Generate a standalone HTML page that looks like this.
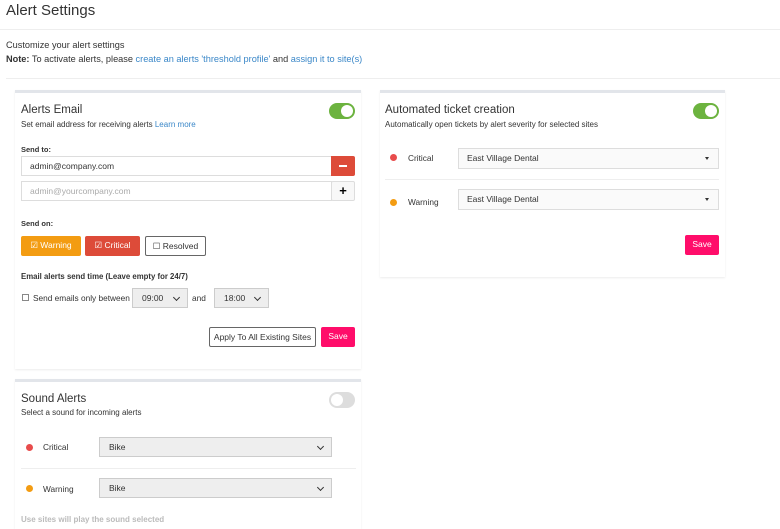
<!DOCTYPE html>
<html><head><style>
*{box-sizing:border-box;margin:0;padding:0}
body{width:780px;height:519px;overflow:hidden;background:#fff;font-family:"Liberation Sans",sans-serif;color:#333;position:relative;font-size:9px}
.a{position:absolute}
.lnk{color:#3a87c8}
.card{position:absolute;border-top:3px solid #e2e5ea;box-shadow:0 1px 2px rgba(0,0,0,.08);background:#fff}
.tog{position:absolute;width:26px;height:16px;border-radius:8px;background:#6cb33f}
.tog::after{content:"";position:absolute;right:2px;top:2px;width:12px;height:12px;border-radius:50%;background:#fff}
.tog.off{background:#ddd}.tog.off::after{left:2px;right:auto}
.inp{position:absolute;border:1px solid #ddd;height:20px;padding-left:8px;line-height:18px;font-size:8.5px}
.btn{position:absolute;height:20px;line-height:18px;text-align:center;font-size:8.5px;border-radius:2px}
.sel{position:absolute;background:#eee;border:1px solid #ccc;height:20px;line-height:18px;padding-left:9px;font-size:8.5px}
.sel::after{content:"";position:absolute;right:8px;top:6px;width:4px;height:4px;border-right:1.5px solid #333;border-bottom:1.5px solid #333;transform:rotate(45deg)}
.dot{position:absolute;width:7px;height:7px;border-radius:50%}
.ws{position:absolute;background:#fafafa;border:1px solid #ddd;height:21px;line-height:19px;padding-left:8px;font-size:8.5px;color:#333}
.ws::after{content:"";position:absolute;right:9px;top:8px;border:2.5px solid transparent;border-top:3px solid #333}
</style></head><body>
<div class="a" style="left:6px;top:2px;font-size:15px;color:#333">Alert Settings</div>
<div class="a" style="left:0;top:29px;width:780px;border-top:1px solid #eee"></div>
<div class="a" style="left:6px;top:40px;font-size:9.2px">Customize your alert settings</div>
<div class="a" style="left:6px;top:54px;font-size:9.2px"><b>Note:</b> To activate alerts, please <span class="lnk">create an alerts 'threshold profile'</span> and <span class="lnk">assign it to site(s)</span></div>
<div class="a" style="left:6px;top:78px;width:774px;border-top:1px solid #eee"></div>

<div class="card" style="left:15px;top:90px;width:346px;height:279px"></div>
<div class="a" style="left:21px;top:104px;font-size:11.5px">Alerts Email</div>
<div class="a" style="left:21px;top:120px;font-size:8px">Set email address for receiving alerts <span class="lnk">Learn more</span></div>
<div class="tog" style="left:329px;top:103px"></div>
<div class="a" style="left:21px;top:145px;font-size:7.5px;font-weight:bold">Send to:</div>
<div class="inp" style="left:21px;top:156px;width:311px">admin@company.com</div>
<div class="btn" style="left:331px;top:156px;width:24px;background:#dd4b39;border-radius:0 2px 2px 0"><span class="a" style="left:8px;top:9px;width:8px;height:2px;background:#fff"></span></div>
<div class="inp" style="left:21px;top:181px;width:311px;color:#aaa">admin@yourcompany.com</div>
<div class="btn" style="left:331px;top:181px;width:24px;border:1px solid #ddd;background:#f8f8f8;font-weight:bold;font-size:13px;color:#000">+</div>
<div class="a" style="left:21px;top:219px;font-size:7.5px;font-weight:bold">Send on:</div>
<div class="btn" style="left:21px;top:236px;width:60px;background:#f39c12;color:#fff">☑ Warning</div>
<div class="btn" style="left:85px;top:236px;width:55px;background:#dd4b39;color:#fff">☑ Critical</div>
<div class="btn" style="left:145px;top:236px;width:61px;border:1px solid #666;color:#333">☐ Resolved</div>
<div class="a" style="left:21px;top:272px;font-size:7.8px;font-weight:bold">Email alerts send time (Leave empty for 24/7)</div>
<div class="a" style="left:22px;top:294px;width:7px;height:7px;border:1px solid #888"></div>
<div class="a" style="left:33px;top:293px;font-size:8.3px">Send emails only between</div>
<div class="sel" style="left:132px;top:288px;width:56px">09:00</div>
<div class="a" style="left:192px;top:293px;font-size:8.3px">and</div>
<div class="sel" style="left:214px;top:288px;width:55px">18:00</div>
<div class="btn" style="left:209px;top:327px;width:107px;border:1px solid #666">Apply To All Existing Sites</div>
<div class="btn" style="left:321px;top:327px;width:34px;background:#ff0d6a;color:#fff">Save</div>

<div class="card" style="left:15px;top:379px;width:346px;height:150px"></div>
<div class="a" style="left:21px;top:393px;font-size:11.5px">Sound Alerts</div>
<div class="a" style="left:21px;top:408px;font-size:8px">Select a sound for incoming alerts</div>
<div class="tog off" style="left:329px;top:392px"></div>
<div class="dot" style="left:26px;top:444px;background:#e84c4c"></div>
<div class="a" style="left:43px;top:442px;font-size:8.3px">Critical</div>
<div class="sel" style="left:99px;top:437px;width:233px">Bike</div>
<div class="a" style="left:21px;top:468px;width:335px;border-top:1px solid #eee"></div>
<div class="dot" style="left:26px;top:485px;background:#f39c12"></div>
<div class="a" style="left:43px;top:484px;font-size:8.3px">Warning</div>
<div class="sel" style="left:99px;top:478px;width:233px">Bike</div>
<div class="a" style="left:21px;top:515px;font-size:8px;color:#bbb;font-weight:bold">Use sites will play the sound selected</div>

<div class="card" style="left:380px;top:90px;width:345px;height:187px"></div>
<div class="a" style="left:385px;top:104px;font-size:11.5px">Automated ticket creation</div>
<div class="a" style="left:385px;top:120px;font-size:8px">Automatically open tickets by alert severity for selected sites</div>
<div class="tog" style="left:693px;top:103px"></div>
<div class="dot" style="left:390px;top:154px;background:#e84c4c"></div>
<div class="a" style="left:408px;top:153px;font-size:8.3px">Critical</div>
<div class="ws" style="left:458px;top:148px;width:261px">East Village Dental</div>
<div class="a" style="left:385px;top:179px;width:334px;border-top:1px solid #eee"></div>
<div class="dot" style="left:390px;top:199px;background:#f39c12"></div>
<div class="a" style="left:408px;top:197px;font-size:8.3px">Warning</div>
<div class="ws" style="left:458px;top:189px;width:261px">East Village Dental</div>
<div class="btn" style="left:685px;top:235px;width:34px;background:#ff0d6a;color:#fff">Save</div>
</body></html>
